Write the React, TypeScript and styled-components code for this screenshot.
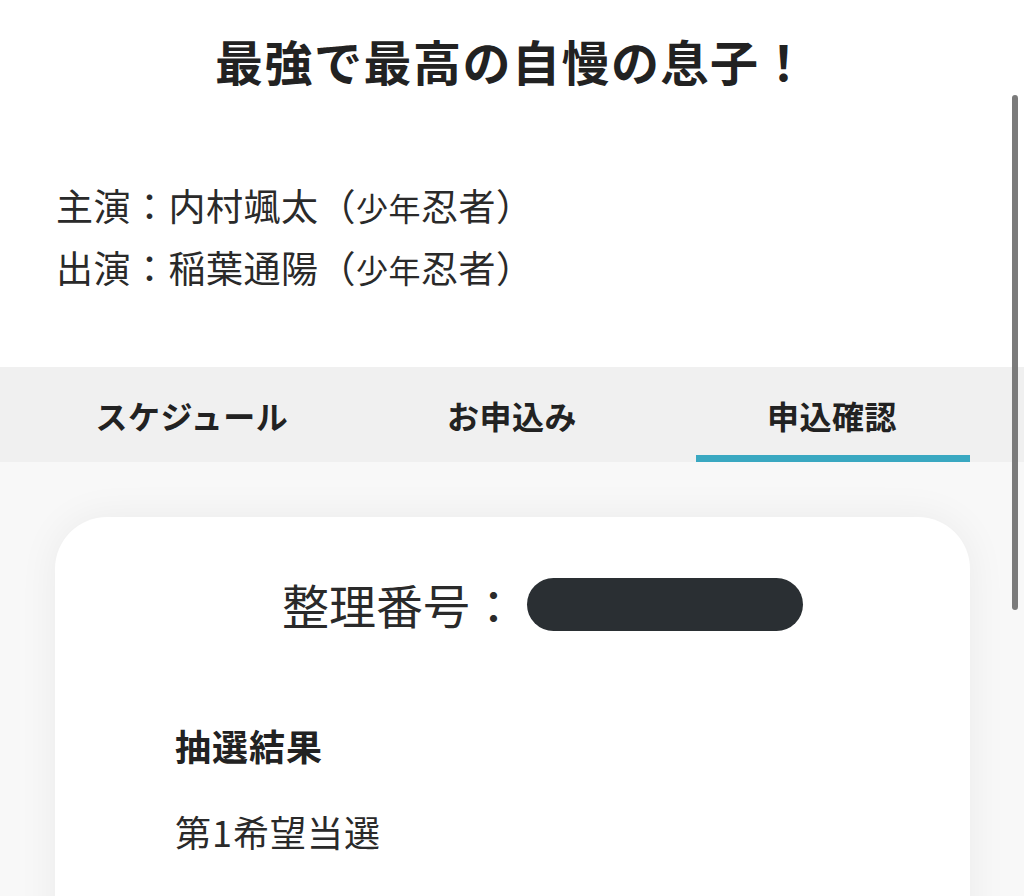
import React from "react";
import styled, { createGlobalStyle } from "styled-components";

const Global = createGlobalStyle`
  html, body {
    margin: 0;
    padding: 0;
    background: #ffffff;
    font-family: "Noto Sans CJK JP", "Noto Sans", sans-serif;
    color: #222222;
    overflow: hidden;
  }
`;

const Page = styled.div`
  width: 1024px;
  height: 896px;
  overflow: hidden;
  position: relative;
  display: flex;
  flex-direction: column;
`;

const Title = styled.h1`
  flex-shrink: 0;
  margin: 0;
  padding-top: 24px;
  font-size: 48px;
  line-height: 72px;
  font-weight: 700;
  text-align: center;
  letter-spacing: 1.5px;
`;

const Cast = styled.div`
  flex-shrink: 0;
  margin-top: 79px;
  padding-left: 56px;
  display: flex;
  flex-direction: column;
`;

const CastLine = styled.div`
  font-size: 37px;
  line-height: 60px;
  color: #2a2a2a;
  letter-spacing: 0.5px;
`;

const Small = styled.span`
  font-size: 32px;
`;

const TabBar = styled.nav`
  flex-shrink: 0;
  margin-top: 68px;
  height: 95px;
  background: #f0f0f0;
  display: grid;
  grid-template-columns: repeat(3, 1fr);
  padding: 0 32px;
`;

const Tab = styled.div<{ $active?: boolean }>`
  position: relative;
  display: flex;
  align-items: center;
  justify-content: center;
  font-size: 32px;
  font-weight: 700;
  letter-spacing: 0.5px;
  color: #222;
  &::after {
    content: "";
    display: ${(p) => (p.$active ? "block" : "none")};
    position: absolute;
    left: 24px;
    right: 22px;
    bottom: 0;
    height: 7px;
    background: #3aa8c1;
  }
`;

const Content = styled.main`
  flex: 1;
  background: #f8f8f8;
  padding: 55px 54px 0 55px;
`;

const Card = styled.section`
  background: #ffffff;
  border-radius: 52px;
  box-shadow: 0 0 40px rgba(0, 0, 0, 0.06);
  min-height: 600px;
  padding: 58px 0 0 120px;
`;

const NumberRow = styled.div`
  display: flex;
  align-items: center;
  justify-content: center;
  padding-right: 60px;
  gap: 10px;
`;

const NumberLabel = styled.span`
  font-size: 47px;
  line-height: 58px;
  color: #2a2a2a;
`;

const Redaction = styled.span`
  display: inline-block;
  width: 276px;
  height: 53px;
  border-radius: 27px;
  background: #2a2f33;
`;

const ResultHeading = styled.h2`
  margin: 87px 0 0 0;
  font-size: 36px;
  line-height: 50px;
  font-weight: 700;
  letter-spacing: 1px;
  color: #222;
`;

const ResultText = styled.p`
  margin: 36px 0 0 0;
  font-size: 36px;
  line-height: 50px;
  letter-spacing: 1px;
  color: #2a2a2a;
`;

const Scrollbar = styled.div`
  position: absolute;
  right: 6px;
  top: 95px;
  width: 6px;
  height: 515px;
  border-radius: 3px;
  background: #7b7b7b;
`;

export default function App() {
  return (
    <Page>
      <Global />
      <Title>最強で最高の自慢の息子！</Title>
      <Cast>
        <CastLine>
          主演：内村颯太（<Small>少年</Small>忍者）
        </CastLine>
        <CastLine>
          出演：稲葉通陽（<Small>少年</Small>忍者）
        </CastLine>
      </Cast>
      <TabBar>
        <Tab>スケジュール</Tab>
        <Tab>お申込み</Tab>
        <Tab $active>申込確認</Tab>
      </TabBar>
      <Content>
        <Card>
          <NumberRow>
            <NumberLabel>整理番号：</NumberLabel>
            <Redaction />
          </NumberRow>
          <ResultHeading>抽選結果</ResultHeading>
          <ResultText>第1希望当選</ResultText>
        </Card>
      </Content>
      <Scrollbar />
    </Page>
  );
}
